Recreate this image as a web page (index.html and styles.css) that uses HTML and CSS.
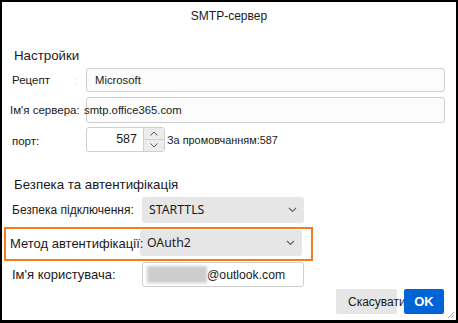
FILE: index.html
```html
<!DOCTYPE html>
<html lang="uk">
  <head>
    <meta charset="UTF-8" />
    <title>SMTP-сервер</title>
    <link rel="stylesheet" href="styles.css">
  </head>
  <body>
    <div class="window">
      <div class="title">SMTP-сервер</div>

      <div class="section">Настройки</div>
      <div class="row row-name">
        <label class="label">Рецепт<span class="faint">:</span></label>
        <div class="input">Microsoft</div>
      </div>
      <div class="row row-server">
        <label class="label">Ім'я сервера:</label>
        <div class="input input-server">smtp.office365.com</div>
      </div>
      <div class="row row-port">
        <label class="label">порт:</label>
        <div class="port">
          <div class="spin">
            <span class="spin-value">587</span>
            <span class="spin-buttons">
              <span class="spin-btn">
                <svg width="8" height="5" viewBox="0 0 8 5"><path d="M0.5 4.5 L4 1 L7.5 4.5" fill="none" stroke="#555" stroke-width="1"/></svg>
              </span>
              <span class="spin-btn">
                <svg width="8" height="5" viewBox="0 0 8 5"><path d="M0.5 0.5 L4 4 L7.5 0.5" fill="none" stroke="#555" stroke-width="1"/></svg>
              </span>
            </span>
          </div>
          <span class="hint">За промовчанням:587</span>
        </div>
      </div>

      <div class="section section-security">Безпека та автентифікація</div>
      <div class="row row-wide row-conn">
        <label class="label label-small">Безпека підключення:</label>
        <div class="select">
          STARTTLS
          <svg class="chevron" width="9" height="6" viewBox="0 0 9 6"><path d="M1 1 L4.5 4.5 L8 1" fill="none" stroke="#666" stroke-width="1.2"/></svg>
        </div>
      </div>
      <div class="highlight">
        <div class="row row-wide row-auth">
          <label class="label label-big">Метод автентифікації:</label>
          <div class="select">
            OAuth2
            <svg class="chevron" width="9" height="6" viewBox="0 0 9 6"><path d="M1 1 L4.5 4.5 L8 1" fill="none" stroke="#666" stroke-width="1.2"/></svg>
          </div>
        </div>
      </div>
      <div class="row row-wide row-user">
        <label class="label label-big">Ім'я користувача:</label>
        <div class="input input-user">
          <span class="blur"></span>@outlook.com
        </div>
      </div>

      <div class="buttons">
        <button class="btn btn-cancel">Скасувати</button>
        <button class="btn btn-ok">OK</button>
      </div>

      <svg class="grip" width="8" height="8" viewBox="0 0 8 8">
        <path d="M7 1 L1 7 M7 4 L4 7" stroke="#aaa" stroke-width="1"/>
      </svg>
    </div>
  </body>
</html>
```

FILE: styles.css
```css
body {
  margin: 0;
  padding: 0;
  background-color: #fff;
  font-family: "Liberation Sans", Arial, sans-serif;
  color: #1a1a1a;
}

.window {
  position: relative;
  width: 458px;
  height: 323px;
  box-sizing: border-box;
  border: 2px solid #000;
  border-bottom-width: 3px;
  background-color: #fff;
}

.title {
  height: 28px;
  line-height: 28px;
  text-align: center;
  font-size: 12px;
}

.section {
  margin: 17px 0 0 12px;
  height: 18px;
  line-height: 18px;
  font-size: 13.3px;
}

.row {
  display: grid;
  grid-template-columns: 74px 359px;
  align-items: center;
  padding-left: 10px;
}

/* labels are drawn over the fields they run into */
.label {
  position: relative;
  z-index: 1;
  font-size: 11.5px;
  white-space: nowrap;
}

.faint {
  color: #dcdcdc;
  margin-left: 24px;
}

.input {
  box-sizing: border-box;
  height: 24px;
  line-height: 22px;
  padding-left: 8px;
  border: 1px solid #cfcfcf;
  border-radius: 3px;
  background-color: #fcfcfc;
  font-size: 11.3px;
  white-space: nowrap;
}

.row-name {
  margin-top: 3px;
}

.row-server {
  margin-top: 5px;
  padding-left: 8px;
  grid-template-columns: 76px 359px;
}

.row-server .input {
  height: 26px;
  line-height: 24px;
}

.input-server {
  padding-left: 0;
  text-indent: -3px;
}

.row-port {
  margin-top: 4px;
}

.row-port .label {
  padding-top: 3px;
}

.port {
  display: flex;
  align-items: center;
}

.spin {
  display: flex;
  box-sizing: border-box;
  width: 79px;
  height: 25px;
  border: 1px solid #cfcfcf;
  border-radius: 3px;
  background-color: #fff;
}

.spin-value {
  flex: 1;
  text-align: right;
  padding-right: 6px;
  line-height: 23px;
  font-size: 12.5px;
}

.spin-buttons {
  display: flex;
  flex-direction: column;
  width: 20px;
  border-left: 1px solid #cfcfcf;
}

.spin-btn {
  flex: 1;
  display: flex;
  align-items: center;
  justify-content: center;
  background-color: #ececec;
}

.spin-btn + .spin-btn {
  border-top: 1px solid #cfcfcf;
}

.hint {
  margin-left: 2px;
  font-size: 10.9px;
}

.section-security {
  margin-top: 24px;
}

.row-wide {
  grid-template-columns: 130px 162px;
}

.label-small {
  font-size: 12px;
}

.label-big {
  font-size: 13px;
}

.select {
  position: relative;
  box-sizing: border-box;
  height: 26px;
  line-height: 26px;
  padding-left: 7px;
  border-radius: 3px;
  background-color: #e6e6e6;
  font-family: "Noto Sans", sans-serif;
  font-size: 12.3px;
}

.chevron {
  position: absolute;
  right: 7px;
  top: 10px;
}

.row-conn {
  margin-top: 3px;
}

.highlight {
  width: 309px;
  height: 34px;
  box-sizing: border-box;
  margin: 4px 0 0 2px;
  padding-top: 1px;
  border: 2px solid #f47b20;
}

.highlight .row {
  padding-left: 4px;
}

.row-user {
  margin-top: 1px;
}

.input-user {
  display: flex;
  align-items: center;
  height: 25px;
  padding-left: 4px;
  background-color: #fff;
  font-size: 12.2px;
}

.blur {
  width: 60px;
  height: 17px;
  background-color: #cdcdcd;
  filter: blur(1.5px);
}

.buttons {
  display: flex;
  justify-content: flex-end;
  gap: 7px;
  margin-top: 2px;
  padding-right: 12px;
}

.btn {
  height: 25px;
  border: none;
  border-radius: 2px;
  font-family: "Liberation Sans", Arial, sans-serif;
  font-size: 12px;
  white-space: nowrap;
  cursor: pointer;
}

.btn-cancel {
  width: 61px;
  padding: 0 0 0 12px;
  text-align: left;
  overflow: visible;
  background-color: #e6e6e6;
  color: #1a1a1a;
}

.btn-ok {
  width: 40px;
  padding: 0;
  background-color: #0063d6;
  color: #fff;
  font-weight: bold;
  font-size: 13px;
}

.grip {
  position: absolute;
  right: 1px;
  bottom: 1px;
}
```
